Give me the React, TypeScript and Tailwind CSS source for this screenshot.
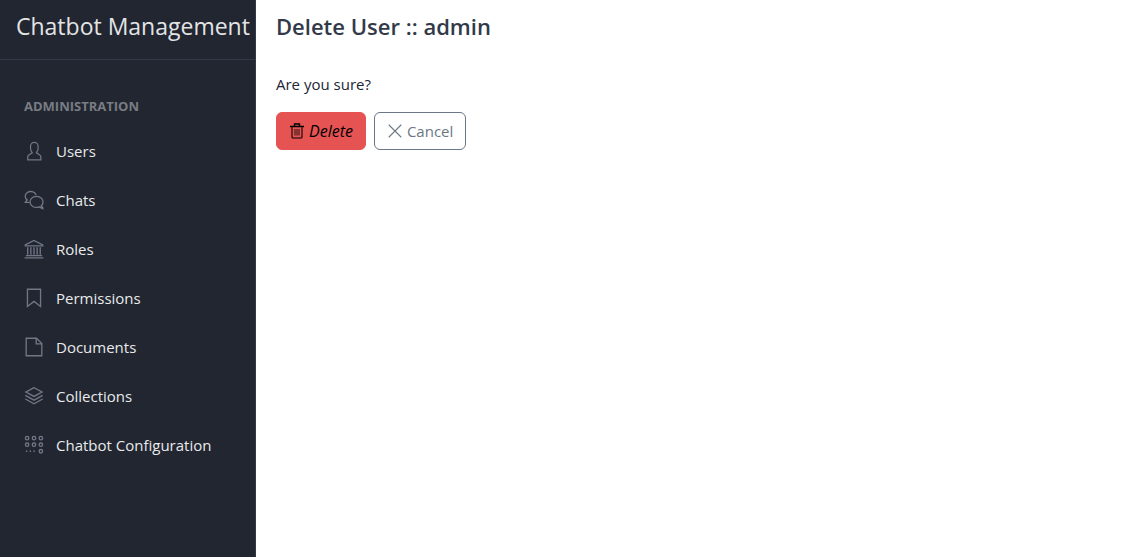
import type { ReactNode } from "react";

function Icon({ className, children }: { className: string; children: ReactNode }) {
  return (
    <svg viewBox="0 0 512 512" aria-hidden="true" fill="none" stroke="currentColor" strokeWidth="34" className={className}>
      {children}
    </svg>
  );
}

const items: { label: string; icon: ReactNode }[] = [
  {
    label: "Users",
    icon: (
      <path
        fill="currentColor"
        stroke="none"
        d="M411.6 343.656l-72.823-47.334 27.455-50.334A80.23 80.23 0 0 0 376 207.681V128a112 112 0 0 0-224 0v79.681a80.236 80.236 0 0 0 9.768 38.308l27.455 50.333L116.4 343.656A79.725 79.725 0 0 0 80 410.732V496h368v-85.268a79.727 79.727 0 0 0-36.4-67.076ZM416 464H112v-53.268a47.836 47.836 0 0 1 21.841-40.246l97.66-63.479-41.64-76.341A48.146 48.146 0 0 1 184 207.681V128a80 80 0 0 1 160 0v79.681a48.146 48.146 0 0 1-5.861 22.985L296.5 307.007l97.662 63.479A47.836 47.836 0 0 1 416 410.732Z"
      />
    ),
  },
  {
    label: "Chats",
    icon: (
      <>
        <path d="M142 318H34l46-66C16 206 14 118 78 70c76-58 202-34 232 58" />
        <path d="M440 408c58-50 62-138 10-194-64-70-194-70-260 0-60 66-46 162 34 208 50 28 112 30 160 8l98 46v-24z" />
      </>
    ),
  },
  {
    label: "Roles",
    icon: (
      <>
        <path d="M32 176v-26L256 36l224 114v26z" />
        <path d="M96 208v192M176 208v192M256 208v192M336 208v192M416 208v192M48 424h416M16 482h480" />
      </>
    ),
  },
  { label: "Permissions", icon: <path d="M88 32h336v440L256 344 88 472z" /> },
  { label: "Documents", icon: <path d="M56 32h264l136 136v312H56zM312 32v144h144" /> },
  {
    label: "Collections",
    icon: (
      <path d="M256 42L50 154l206 112 206-112zM34 240l222 122 222-122M34 332l222 122 222-122" />
    ),
  },
  {
    label: "Chatbot Configuration",
    icon: (
      <>
        <circle cx="80" cy="80" r="44" />
        <circle cx="256" cy="80" r="44" />
        <circle cx="432" cy="80" r="44" />
        <circle cx="80" cy="248" r="44" />
        <circle cx="256" cy="248" r="44" />
        <circle cx="432" cy="248" r="44" />
        <circle cx="432" cy="416" r="44" />
        <path d="M48 416h36M144 416h36M240 416h36" />
      </>
    ),
  },
];

export default function App() {
  return (
    <div className="flex min-h-screen bg-white font-['Open_Sans','Noto_Sans',sans-serif] text-[15px] leading-6 text-[#212631]">
      <aside className="w-64 shrink-0 border-r border-[#323a49] bg-[#212631]">
        <div className="flex h-15 items-start border-b border-[#323a49] px-4 pt-3 text-[23px] leading-7 whitespace-nowrap text-[#e3e4e6]">
          Chatbot Management
        </div>
        <nav className="px-3 pt-8" aria-labelledby="section-title">
          <h2 id="section-title" className="px-3 py-1 text-[13px] leading-5 font-bold text-[#797c83] uppercase">
            Administration
          </h2>
          <ul className="mt-1.5">
            {items.map(({ label, icon }) => (
              <li key={label}>
                <a href="#" className="flex h-[49px] items-center gap-3 px-3 text-[#e9eaeb]">
                  <Icon className="size-5 shrink-0 text-[#727786]">{icon}</Icon>
                  {label}
                </a>
              </li>
            ))}
          </ul>
        </nav>
      </aside>
      <main className="min-w-0 grow px-5 pt-3">
        <h1 className="text-[22px] leading-7 font-semibold text-[#323a49]">Delete User :: admin</h1>
        <p className="mt-8">Are you sure?</p>
        <div className="mt-4 flex gap-2">
          <button
            type="button"
            className="flex h-[38px] items-center gap-1 rounded-md border border-[#e55353] bg-[#e55353] px-3 text-base text-black italic"
          >
            <Icon className="size-4">
              <path d="M96 136v312c0 20 12 32 32 32h256c20 0 32-12 32-32V136" />
              <path d="M32 112h448M176 96V32h160v64" strokeWidth="44" />
              <path d="M192 192v208M256 192v208M320 192v208" strokeWidth="26" />
            </Icon>
            Delete
          </button>
          <button
            type="button"
            className="flex h-[38px] items-center gap-1 rounded-md border border-[#6b7785] px-3 text-[#6b7785]"
          >
            <Icon className="size-4">
              <path d="M56 56l400 400M456 56L56 456" />
            </Icon>
            Cancel
          </button>
        </div>
      </main>
    </div>
  );
}
